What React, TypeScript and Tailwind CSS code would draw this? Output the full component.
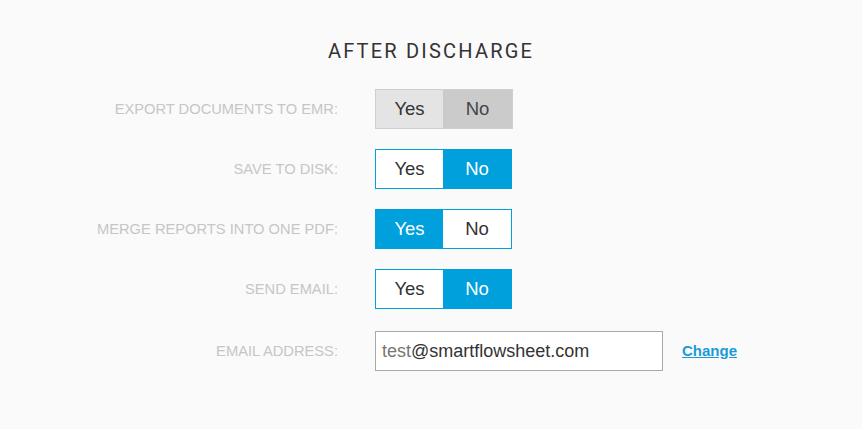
import React, { useState } from "react";

type Row = { label: string; value: boolean; disabled?: boolean };

const rows: Row[] = [
  { label: "EXPORT DOCUMENTS TO EMR:", value: false, disabled: true },
  { label: "SAVE TO DISK:", value: false },
  { label: "MERGE REPORTS INTO ONE PDF:", value: true },
  { label: "SEND EMAIL:", value: false },
];

function Toggle({ value, disabled }: { value: boolean; disabled?: boolean }) {
  const [on, setOn] = useState(value);

  if (disabled) {
    return (
      <div className="flex h-[40px] w-[138px] border border-[#cfcfcf] text-[18.5px] text-[#333]">
        <div className="flex w-[67px] items-center justify-center bg-[#e4e4e4]">Yes</div>
        <div className="flex flex-1 items-center justify-center bg-[#cbcbcb] text-[#444]">No</div>
      </div>
    );
  }

  return (
    <div className="flex h-[40px] w-[137px] border border-[#00a0dc] text-[18.5px]">
      <button
        type="button"
        onClick={() => setOn(true)}
        className={`flex w-[67px] items-center justify-center ${on ? "bg-[#00a0dc] text-white" : "bg-white text-[#333]"}`}
      >
        Yes
      </button>
      <button
        type="button"
        onClick={() => setOn(false)}
        className={`flex flex-1 items-center justify-center ${!on ? "bg-[#00a0dc] text-white" : "bg-white text-[#333]"}`}
      >
        No
      </button>
    </div>
  );
}

export default function App() {
  return (
    <div className="min-h-screen w-full bg-[#fafafa] font-['Liberation_Sans',Arial,sans-serif]">
      <h1 className="pt-[36px] text-center font-['Roboto',sans-serif] text-[20px] font-normal tracking-[2.2px] text-[#333]">
        AFTER DISCHARGE
      </h1>

      <div className="mt-[23px] flex flex-col gap-[20px]">
        {rows.map((row) => (
          <div key={row.label} className="flex items-center">
            <div className="w-[338px] text-right text-[14.7px] text-[#c6c6c6]">{row.label}</div>
            <div className="ml-[37px]">
              <Toggle value={row.value} disabled={row.disabled} />
            </div>
          </div>
        ))}

        <div className="mt-[2px] flex items-center">
          <div className="w-[338px] text-right text-[14.7px] text-[#c6c6c6]">EMAIL ADDRESS:</div>
          <div className="ml-[37px] flex h-[40px] w-[288px] items-center border border-[#a9a9a9] bg-white px-[6px] text-[18px]">
            <span className="text-[#777]">test</span>
            <span className="text-[#333]">@smartflowsheet.com</span>
          </div>
          <a href="#" className="ml-[19px] text-[15px] font-bold text-[#1a9ad6] underline">
            Change
          </a>
        </div>
      </div>
    </div>
  );
}
